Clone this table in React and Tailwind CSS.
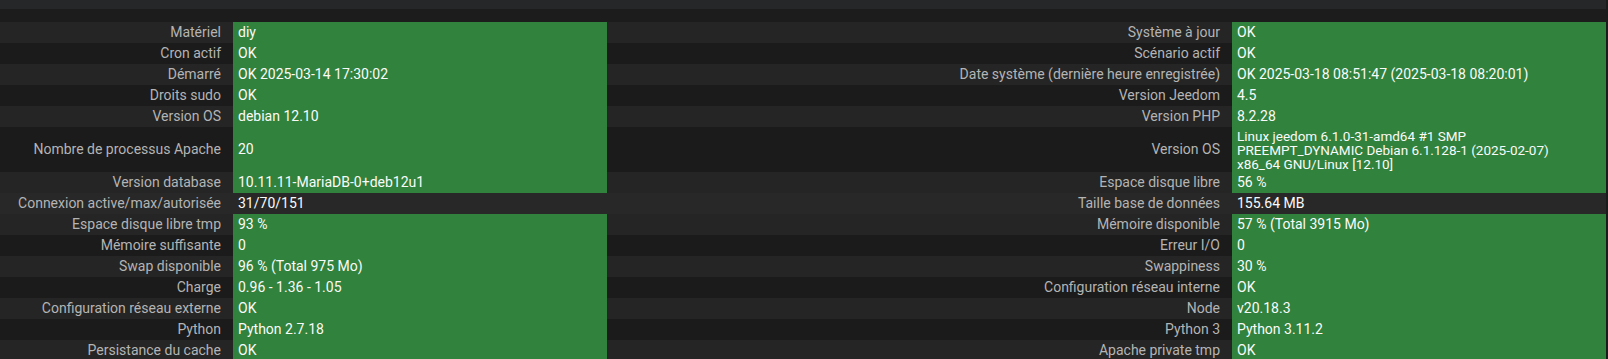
const left = [
  ["Matériel", "diy"],
  ["Cron actif", "OK"],
  ["Démarré", "OK 2025-03-14 17:30:02"],
  ["Droits sudo", "OK"],
  ["Version OS", "debian 12.10"],
  ["Nombre de processus Apache", "20"],
  ["Version database", "10.11.11-MariaDB-0+deb12u1"],
  ["Connexion active/max/autorisée", "31/70/151", true],
  ["Espace disque libre tmp", "93 %"],
  ["Mémoire suffisante", "0"],
  ["Swap disponible", "96 % (Total 975 Mo)"],
  ["Charge", "0.96 - 1.36 - 1.05"],
  ["Configuration réseau externe", "OK"],
  ["Python", "Python 2.7.18"],
  ["Persistance du cache", "OK"],
];

const right = [
  ["Système à jour", "OK"],
  ["Scénario actif", "OK"],
  ["Date système (dernière heure enregistrée)", "OK 2025-03-18 08:51:47 (2025-03-18 08:20:01)"],
  ["Version Jeedom", "4.5"],
  ["Version PHP", "8.2.28"],
  ["Version OS", ["Linux jeedom 6.1.0-31-amd64 #1 SMP", "PREEMPT_DYNAMIC Debian 6.1.128-1 (2025-02-07)", "x86_64 GNU/Linux [12.10]"]],
  ["Espace disque libre", "56 %"],
  ["Taille base de données", "155.64 MB", true],
  ["Mémoire disponible", "57 % (Total 3915 Mo)"],
  ["Erreur I/O", "0"],
  ["Swappiness", "30 %"],
  ["Configuration réseau interne", "OK"],
  ["Node", "v20.18.3"],
  ["Python 3", "Python 3.11.2"],
  ["Apache private tmp", "OK"],
];

function Value({ value, plain }) {
  return (
    <td className={(plain ? "" : "bg-[#31823c] ") + "pl-[5px] pr-1 py-0 text-[#fafafa] align-middle leading-[17px]"}>
      {Array.isArray(value) ? (
        <div className="text-[13.5px] leading-[14px] py-[1.5px]">
          {value.map((l) => (
            <div key={l}>{l}</div>
          ))}
        </div>
      ) : (
        value
      )}
    </td>
  );
}

export default function App() {
  return (
    <div
      className="w-[1608px] h-[359px] overflow-hidden bg-[#1b1b1b] pr-[2px] text-[14px]"
      style={{ fontFamily: "Roboto, 'Liberation Sans', sans-serif" }}
    >
      <div className="h-[9px] bg-[#252728]" />
      <div className="h-[13px] bg-[#1c1c1c]" />
      <table className="w-[1606px] table-fixed border-collapse">
        <colgroup>
          <col className="w-[233px]" />
          <col className="w-[374px]" />
          <col className="w-[625px]" />
          <col className="w-[374px]" />
        </colgroup>
        <tbody>
          {left.map((l, i) => {
            const r = right[i];
            const bg = l[2] ? "bg-[#282828]" : i % 2 === 0 ? "bg-[#252525]" : "bg-[#1b1b1b]";
            return (
              <tr key={i} className={bg + " h-[21px]"}>
                <td className="text-right pr-[12px] py-0 text-[#b4b4b4] align-middle leading-[17px]">{l[0]}</td>
                <Value value={l[1]} plain={l[2]} />
                <td className="text-right pr-[12px] py-0 text-[#b4b4b4] align-middle leading-[17px]">{r[0]}</td>
                <Value value={r[1]} plain={r[2]} />
              </tr>
            );
          })}
        </tbody>
      </table>
    </div>
  );
}
